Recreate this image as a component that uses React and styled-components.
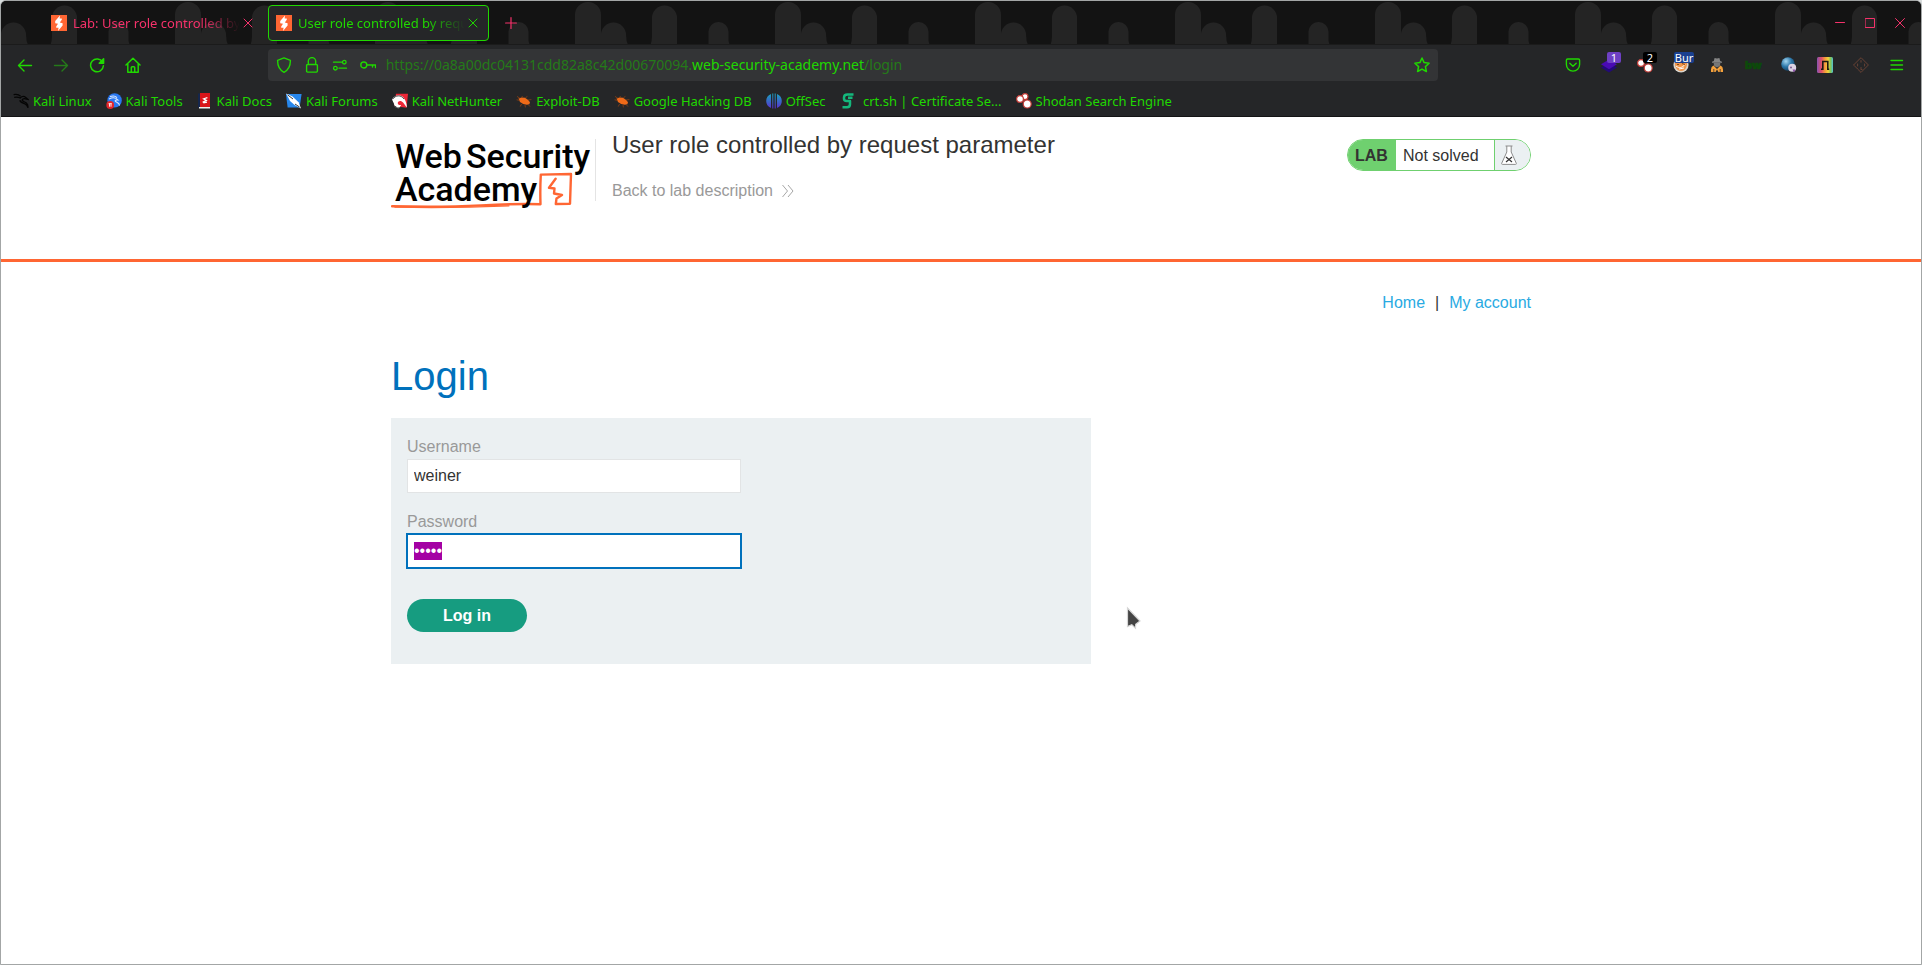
import React, { useEffect, useRef } from "react";
import styled, { createGlobalStyle } from "styled-components";

const c = {
  green: "#20d800",
  greenDim: "#257a19",
  pink: "#f5326b",
  strip: "#131313",
  lump: "#242424",
  bar: "#252628",
  field: "#333436",
  orange: "#ff6633",
};
const uiFont = '"Noto Sans", "Open Sans", sans-serif';

const GlobalStyle = createGlobalStyle`
  *, *::before, *::after { box-sizing: border-box; }
  body { margin: 0; background: #d8dcdc; font-family: "Liberation Sans", Arial, sans-serif; font-size: 16px; color: #333332; }
  button, input { font: inherit; color: inherit; }
  button { border: 0; background: none; padding: 0; cursor: pointer; }
  svg { display: block; flex: none; }
`;

const Window = styled.div`
  display: flex;
  flex-direction: column;
  min-height: 100vh;
  border: 1px solid #a3a6a6;
  border-radius: 6px 6px 0 0;
  overflow: hidden;
  background: #fff;
`;
const Chrome = styled.header`
  background: ${c.bar};
  color: ${c.green};
  font-family: ${uiFont};
  border-bottom: 1px solid #141415;
`;
const TabStrip = styled.div`
  position: relative;
  display: flex;
  align-items: center;
  gap: 4px;
  height: 44px;
  padding: 0 6px 0 42px;
  background: ${c.strip};
`;
const StripArt = styled.svg`
  position: absolute;
  inset: 0;
  width: 100%;
  height: 100%;
`;
const Tab = styled.div`
  position: relative;
  display: flex;
  align-items: center;
  width: 221px;
  height: 36px;
  padding: 0 8px 0 7px;
  border: 1px solid ${(p) => (p.$active ? c.green : "transparent")};
  border-radius: 4px;
  background: ${(p) => (p.$active ? c.bar : "transparent")};
  color: ${(p) => (p.$active ? c.green : c.pink)};
`;
const TabTitle = styled.button`
  display: flex;
  align-items: center;
  gap: 6px;
  flex: 1;
  min-width: 0;
  font-size: 13px;
  line-height: 20px;
  text-align: left;
`;
const TabText = styled.span`
  flex: 1;
  overflow: hidden;
  white-space: nowrap;
  mask-image: linear-gradient(to right, #000 calc(100% - 40px), transparent);
`;
const IconButton = styled.button`
  position: relative;
  display: flex;
  align-items: center;
  justify-content: center;
  flex: none;
  width: ${(p) => p.$w || 36}px;
  height: 32px;
  color: ${(p) => p.$color || "inherit"};
`;
const WindowControls = styled.div`
  display: flex;
  margin-left: auto;
`;
const Toolbar = styled.nav`
  display: flex;
  align-items: center;
  height: 40px;
  padding: 0 6px;
`;
const Spacer = styled.div`
  flex: 1;
`;
const UrlBar = styled.div`
  display: flex;
  align-items: center;
  flex: 10;
  min-width: 0;
  height: 32px;
  padding: 0 2px;
  border-radius: 4px;
  background: ${c.field};
`;
const Address = styled.div`
  flex: 1;
  min-width: 0;
  padding-left: 4px;
  overflow: hidden;
  white-space: nowrap;
  font-size: 14px;
  line-height: 24px;
  color: ${c.greenDim};
`;
const Domain = styled.span`
  color: ${c.green};
`;
const Badge = styled.span`
  position: absolute;
  top: 3px;
  right: ${(p) => (p.$wide ? 5 : 6)}px;
  min-width: ${(p) => (p.$wide ? 20 : 14)}px;
  border-radius: 2px;
  background: ${(p) => p.$bg};
  color: #fff;
  font-size: 11px;
  line-height: 11px;
  text-align: center;
`;
const Bookmarks = styled.ul`
  display: flex;
  align-items: center;
  gap: 14px;
  height: 31px;
  margin: 0;
  padding: 1px 12px 0;
  list-style: none;
`;
const Bookmark = styled.a`
  display: flex;
  align-items: center;
  gap: 4px;
  color: inherit;
  font-size: 13px;
  line-height: 20px;
  text-decoration: none;
  white-space: pre;
`;

const Container = styled.div`
  width: 100%;
  max-width: 1140px;
  margin: 0 auto;
`;
const LabHeader = styled.section`
  height: 145px;
  border-bottom: 3px solid ${c.orange};
`;
const LabRow = styled(Container)`
  display: flex;
  align-items: flex-start;
`;
const LogoLink = styled.a`
  margin-top: 22px;
  padding-right: 4px;
  border-right: 1px solid #e4e4e4;
  height: 62px;
`;
const TitleBlock = styled.div`
  margin-left: 16px;
  padding-top: 14px;
`;
const LabTitle = styled.h2`
  margin: 0 0 17px;
  font-size: 24px;
  line-height: 28px;
  font-weight: 400;
`;
const BackLink = styled.a`
  display: flex;
  align-items: center;
  gap: 8px;
  color: #999;
  line-height: 30px;
  text-decoration: none;
`;
const Status = styled.div`
  display: flex;
  width: 184px;
  height: 32px;
  margin: 22px 0 0 auto;
  border: 1px solid #6fd06f;
  border-radius: 16px;
  overflow: hidden;
  line-height: 32px;
`;
const StatusTag = styled.strong`
  width: 48px;
  padding-left: 7px;
  background: #6fd06f;
`;
const StatusText = styled.span`
  flex: 1;
  padding-left: 7px;
`;
const StatusIcon = styled.span`
  display: flex;
  align-items: center;
  width: 36px;
  padding-left: 6px;
  border-left: 1px solid #6fd06f;
  background: #ebf0f2;
`;
const Main = styled(Container).attrs({ as: "main" })`
  padding-top: 29px;
`;
const PageNav = styled.nav`
  display: flex;
  justify-content: flex-end;
  gap: 10px;
  line-height: 24px;
`;
const NavLink = styled.a`
  color: #29aae2;
  text-decoration: none;
`;
const Heading = styled.h1`
  margin: 38px 0 19px;
  color: #0071bc;
  font-size: 40px;
  line-height: 46px;
  font-weight: 400;
`;
const LoginForm = styled.form`
  max-width: 700px;
  padding: 16px 16px 32px;
  background: #ebf0f2;
`;
const Field = styled.div`
  margin-bottom: 16px;
`;
const Label = styled.label`
  display: block;
  color: #999;
  line-height: 25px;
`;
const Input = styled.input`
  display: block;
  width: 334px;
  max-width: 100%;
  height: 34px;
  padding: 0 6px;
  border: 1px solid #e2e4e5;
  border-radius: 0;
  background: #fff;
  outline: 0;
  &:focus {
    border-color: #0071bc;
    box-shadow: 0 0 0 1px #0071bc;
  }
  &::selection {
    background: rgba(164, 0, 164, 0.996);
    color: #fff;
  }
`;
const Submit = styled.button`
  display: block;
  width: 120px;
  height: 33px;
  margin-top: 31px;
  border-radius: 17px;
  background: #169c80;
  color: #fff;
  font-weight: 700;
`;
const Pointer = styled.svg`
  position: absolute;
  left: 1125px;
  top: 605px;
`;

const Line = ({ size = 16, w = 1.3, children, ...rest }) => (
  <svg width={size} height={size} viewBox={`0 0 ${size} ${size}`} fill="none" stroke="currentColor" strokeWidth={w} strokeLinecap="round" strokeLinejoin="round" aria-hidden="true" {...rest}>
    {children}
  </svg>
);
const Pic = ({ children }) => (
  <svg width="16" height="16" viewBox="0 0 16 16" aria-hidden="true">{children}</svg>
);

const Favicon = () => (
  <Pic>
    <path fill="#ff6633" d="M0 0h16v16H0z" />
    <path fill="#fff" d="M9 .4 4.200 6v2.200l2.800.6-1.800 2.600v1.400h2.400L7 16l4.600-5.600V8.200l-2.800-.6L10.800 4.800V3.400H8.600z" />
  </Pic>
);
const CloseIcon = () => (
  <Line size={10} w={1}><path d="M1 1l8 8M9 1L1 9" /></Line>
);
const Shodan = ({ three }) => (
  <Pic>
    <g stroke="#c23a35" strokeWidth="1.2" fill="#fff">
      {three && <circle cx="9" cy="3.6" r="3" />}
      <circle cx="4" cy="6" r="3.400" />
      <circle cx="11.2" cy="11" r="4" />
    </g>
  </Pic>
);
const Bug = () => (
  <Pic>
    <path fill="#ee6a18" d="M2.500 5.600 5.500 4.400l3.500.4 3.200 2.200 1.800 2.200-.6 2-2.600.6-3.600-.8L4 9z" />
    <path stroke="#9a4512" strokeWidth=".7" fill="none" d="M1 3.400l3 2M.6 6.800l3 .6M5.400 4.600 6.600 3M9.400 4.800l2-1.400M12 7l3.400-.4M5.600 11l-1.400 2.600M9 12l.4 2.400M12.600 12l1.400 1.600" />
  </Pic>
);

const bookmarks = [
  ["Kali Linux", <Pic><path d="M.6 1.6c3-.6 5.400 0 7 1.600M1.200 4.300c2.400-.4 4.500-.2 6 .7 1.500-1.600 4-1.800 5.600-.6l2 1.900-2.300-.5c-1.500-.3-2.900.1-3.400 1.200.5 1.700 2.700 1.800 4.300 3 1.300 1.100 1.700 2.800 1.600 4.800-.6-2-1.300-3.300-3-4-2-.7-4.500-1.300-5.200-3.600" fill="none" stroke="#050505" strokeWidth="1.300" /></Pic>],
  ["Kali Tools", <Pic><circle cx="8.600" cy="7.400" r="7.200" fill="#2a78f0" /><path d="M3 6c3.500-1.800 7-1.500 9 1-2-.3-3.500.4-2.500 1.500 1.500 1 4 1 4 4M4 3.600c3-1 5.500-.6 7 1" fill="none" stroke="#dbe9ff" strokeWidth="1.100" /><circle cx="4.200" cy="12" r="3.900" fill="#e3262b" /><path d="M2.600 10.700h3.200M3.500 10.700v3M5 10.700v3" stroke="#fff" strokeWidth=".9" /></Pic>],
  ["Kali Docs", <Pic><path fill="#15264c" d="M1 .4h3v14.400H1z" /><path fill="#d91419" d="M3 0h10v14H3z" /><path fill="#eee" d="M2 14h11v1.600H2z" /><path d="M10.400 4.600 6.600 5.800l2.800 1.600-3.800 1.800M6.400 9.800l3.600-.6" fill="none" stroke="#fff" strokeWidth="1.200" /></Pic>],
  ["Kali Forums", <Pic><path fill="#2787ec" d="M0 1h15.600l-2 13.600H1.600z" /><path fill="#fff" d="M.2.4 6.500 3.400l6.100 5.800L15 15.600 8.600 12 4 8z" /><path d="M1.500 1.800 7 6M9 11l4.500 3" fill="none" stroke="#222" strokeWidth=".9" /></Pic>],
  ["Kali NetHunter", <Pic><path fill="#ee2737" d="M4 .8h12l-1.400 14L2 13z" /><path fill="#fff" d="M0 6.600C2 2.600 6.600 1 10 3.200c3 2 4.600 6.600 5 11.200-2-1.600-3-5-5.600-6.200-2-.8-4 .4-3.600 2.400.3 1.300 2 1.700 3.400 1.400L7 15.200c-3 0-5-1.400-5-4.400z" /><path d="M.6 6.200C3.600 2 9 1.600 12 6M2.500 12.500C4 15 7 15.500 9.500 14.500" fill="none" stroke="#333" strokeWidth=".9" /></Pic>],
  ["Exploit-DB", <Bug />],
  ["Google Hacking DB", <Bug />],
  ["OffSec", <Pic><defs><linearGradient id="off" x1="0" y1="0" x2="0" y2="16" gradientUnits="userSpaceOnUse"><stop offset="0" stopColor="#16a8bd" /><stop offset="1" stopColor="#5b2ad0" /></linearGradient></defs><path fill="url(#off)" d="M5 1v14A7.500 7.500 0 0 1 5 1zM6.300.6l1-.2v15.200l-1-.2zM8.700.4l1 .2v14.800l-1 .2zM11 1a7.500 7.500 0 0 1 0 14z" /></Pic>],
  [" crt.sh | Certificate Se...", <Pic><path fill="none" stroke="#14b87c" strokeWidth="2.500" strokeLinejoin="round" d="M13.500 1.600H7.400Q4 1.600 4 4.600v1.200q0 2.200 2.600 2.200H10v3.200q0 3-3 3H2.500M8 4.800h4.500" /></Pic>],
  ["Shodan Search Engine", <Shodan three />],
];

function StripPattern() {
  return (
    <StripArt aria-hidden="true">
      <defs>
        <pattern id="lumps" x="-26" y="0" width="200" height="44" patternUnits="userSpaceOnUse">
          <g fill={c.lump}>
            <path d="M0 44V14a13 13 0 0 1 26 0v20a12.500 12.500 0 0 1 25 0q0 6 2 10z" />
            <path d="M75.500 44q1.500-4 1.500-8V17a12.500 12.500 0 0 1 25 0v27z" />
            <path d="M133.500 44V31a10 10 0 0 1 20 0v9l1 4z" />
          </g>
        </pattern>
      </defs>
      <rect width="100%" height="44" fill="url(#lumps)" />
      <path d="M0 43.500h4000" stroke="#1b1b1b" />
    </StripArt>
  );
}

function BrowserTab({ title, active }) {
  return (
    <Tab $active={active}>
      <TabTitle type="button" role="tab" aria-selected={!!active}>
        <Favicon />
        <TabText>{title}</TabText>
      </TabTitle>
      <IconButton $w={15} type="button" aria-label="Close tab"><CloseIcon /></IconButton>
    </Tab>
  );
}

function Extensions() {
  return (
    <>
      <IconButton aria-label="Save to Pocket"><Line w={1.4}><path d="M2.600 2h10.800q1.200 0 1.200 1.200V7.500a6.600 6.600 0 0 1-13.200 0V3.200Q1.400 2 2.600 2zM4.800 6.200 8 9.300l3.200-3.100" /></Line></IconButton>
      <IconButton aria-label="Layers">
        <Pic><path fill="#230a78" d="M0 10.500 8 6l8 4.500-8 5z" /><path fill="#4a0ab4" d="M0 7.300 8 2.500l8 4.800-8 4.900z" /></Pic>
        <Badge $bg="#6e40c4">1</Badge>
      </IconButton>
      <IconButton aria-label="Shodan"><Shodan /><Badge $bg="#000">2</Badge></IconButton>
      <IconButton aria-label="Burp proxy">
        <Pic><circle cx="8" cy="7.800" r="7.600" fill="#d9d4cc" /><path fill="#f0964a" d="M2 5h12c.6 4-1.500 9-6 9S1.400 9 2 5z" /><path d="M3 9c3 2.500 6 2 9-1.500M6 12l5-1" stroke="#fff" strokeWidth="1" fill="none" /><path d="M9 6.500l3 1M4 7.500h2" stroke="#8b4c14" /></Pic>
        <Badge $wide $bg="#1a4090">Bur</Badge>
      </IconButton>
      <IconButton aria-label="User agent">
        <Pic><path fill="#858585" d="M5.600 1l2.400.6L10.400 1l.8 3 1.800.8v1H3v-1L4.800 4z" /><path fill="#777" d="M4.600 6h6.800L10.800 9 8 10.600 5.200 9z" /><path fill="#f5a13b" d="M4.500 8.600 8 12l3.500-3.400q2.500 1 2.500 4V15H9.500L8 12.500 6.500 15H2v-2.400q0-3 2.500-4z" /><path d="M4.800 12v3M11.200 12v3" stroke="#333" strokeWidth=".8" /></Pic>
      </IconButton>
      <IconButton aria-label="BuiltWith">
        <svg width="18" height="16" viewBox="0 0 18 16"><text x="1" y="12" fontFamily="Inter, sans-serif" fontWeight="900" fontSize="11" fill="#0c4a0a" stroke="#0c4a0a" strokeWidth=".6">bw</text></svg>
      </IconButton>
      <IconButton aria-label="Web lookup">
        <Pic><defs><radialGradient id="globe" cx=".35" cy=".3" r=".8"><stop offset="0" stopColor="#a6d8f2" /><stop offset=".5" stopColor="#2d78aa" /><stop offset="1" stopColor="#0d3556" /></radialGradient></defs><circle cx="7" cy="7" r="6.800" fill="url(#globe)" /><circle cx="11.200" cy="10.800" r="4" fill="#dcd3e4" /><circle cx="10" cy="10.600" r="1" fill="#7a5a92" /><path fill="#8d4fa8" d="M11.500 12.500h3L13 15.500z" /></Pic>
      </IconButton>
      <IconButton aria-label="Rainbow">
        <Pic><defs><linearGradient id="rain"><stop offset="0" stopColor="#8a52b0" /><stop offset=".28" stopColor="#e0506a" /><stop offset=".5" stopColor="#f49a3a" /><stop offset=".7" stopColor="#f0d23c" /><stop offset=".86" stopColor="#7cc65a" /><stop offset="1" stopColor="#55bfd8" /></linearGradient></defs><rect width="16" height="16" rx="1.500" fill="url(#rain)" /><path d="M4 12.200h1.800V4.500h5v7.700h1.400" fill="none" stroke="#1b1a14" strokeWidth="1.600" /></Pic>
      </IconButton>
      <IconButton aria-label="Diamond" $color="#7a4a38">
        <Line w={0.8} strokeDasharray="2 .6"><path d="M8 .6 15.400 8 8 15.400.6 8zM8 3.600v1.600M8 10.500v2h1M4.600 7v2M11.600 7v2" /></Line>
      </IconButton>
      <IconButton aria-label="Menu"><Line w={1.4}><path d="M2 3.500h11.500M2 8h11.500M2 12.500h11.500" /></Line></IconButton>
    </>
  );
}

function BrowserChrome() {
  return (
    <Chrome>
      <TabStrip role="tablist">
        <StripPattern />
        <BrowserTab title="Lab: User role controlled by" />
        <BrowserTab title="User role controlled by requ" active />
        <IconButton $color={c.pink} aria-label="New tab"><Line size={12} w={1.2}><path d="M6 .6v10.800M.6 6h10.800" /></Line></IconButton>
        <WindowControls>
          <IconButton $w={30} $color={c.pink} aria-label="Minimize"><Line size={10} w={1}><path d="M.5 4.500h9" /></Line></IconButton>
          <IconButton $w={30} $color={c.pink} aria-label="Maximize"><Line size={10} w={1}><path d="M.5.5h9v9h-9z" /></Line></IconButton>
          <IconButton $w={30} $color={c.pink} aria-label="Close window"><Line size={10} w={1}><path d="M.5.5l9 9M9.500.5l-9 9" /></Line></IconButton>
        </WindowControls>
      </TabStrip>
      <Toolbar aria-label="Browser toolbar">
        <IconButton aria-label="Back"><Line w={1.400}><path d="M14.500 8.500H1.500M7 3 1.500 8.500 7 14" /></Line></IconButton>
        <IconButton $color={c.greenDim} aria-label="Forward"><Line w={1.400}><path d="M1.500 8.500h13M9 3l5.500 5.500L9 14" /></Line></IconButton>
        <IconButton aria-label="Reload"><Line w={1.500}><path d="M13.600 5.200A6.400 6.400 0 1 0 14.400 8.800" /><path d="M14.600 1.800v4.400h-4.400z" fill="currentColor" /></Line></IconButton>
        <IconButton aria-label="Home"><Line w={1.500}><path d="M1 8 8 1.200 15 8M2.800 6.800v8.400h10.400V6.800M6.300 15v-4.400q0-.9.9-.9h1.600q.9 0 .9.9V15" /></Line></IconButton>
        <Spacer />
        <UrlBar>
          <IconButton $w={28} aria-label="Tracking protection"><Line w={1.400}><path d="M8 .9 14.400 3.300q.2 8.600-6.400 12Q1.400 11.900 1.600 3.300z" /></Line></IconButton>
          <IconButton $w={28} aria-label="Connection security"><Line w={1.400}><path d="M4.300 7.500V4.300a3.700 3.700 0 0 1 7.400 0V7.500M3.600 7.500h8.800q1 0 1 1v5.600q0 1-1 1H3.600q-1 0-1-1V8.500q0-1 1-1z" /></Line></IconButton>
          <IconButton $w={28} aria-label="Permissions"><Line w={1.300}><path d="M1.500 5.200h8M7 11.200h7.500" /><circle cx="12.300" cy="5.200" r="1.800" /><circle cx="3.400" cy="11.200" r="1.800" /></Line></IconButton>
          <IconButton $w={28} aria-label="Saved login"><Line w={1.400}><circle cx="3.800" cy="8" r="3" /><path d="M6.800 8h8.700v2.600M12.500 8v2" /></Line></IconButton>
          <Address role="textbox" aria-label="Address" tabIndex={0}>
            https://0a8a00dc04131cdd82a8c42d00670094.<Domain>web-security-academy.net</Domain>/login
          </Address>
          <IconButton $w={28} aria-label="Bookmark this page"><Line w={1.500}><path d="M8 1l2.100 4.600 5 .6-3.700 3.400 1 4.900L8 12.100l-4.400 2.400 1-4.900L.9 6.200l5-.6z" /></Line></IconButton>
        </UrlBar>
        <Spacer />
        <Extensions />
      </Toolbar>
      <Bookmarks>
        {bookmarks.map(([label, icon]) => (
          <li key={label}><Bookmark href="#">{icon}<span>{label}</span></Bookmark></li>
        ))}
      </Bookmarks>
    </Chrome>
  );
}

const Logo = () => (
  <svg width="200" height="72" viewBox="0 0 200 72" role="img" aria-label="Web Security Academy">
    <g fill="none" stroke={c.orange} strokeLinejoin="round" strokeLinecap="round">
      <path strokeWidth="2.400" d="M1 67.200Q50 68.500 90 66.400T149.500 65.200Q149 50 149.800 35.600L180 35 179 64.800 164.800 65 165.500 59.500 171 56 163 54.500 163.500 49.500 158 48.800 164.600 39.800" />
      <path strokeWidth="1.200" d="M4 68.200Q60 69.500 118 66.800" />
    </g>
    <g fill="#000" fontFamily="Roboto, sans-serif" fontWeight="500" fontSize="34">
      <text x="4" y="29">Web</text>
      <text x="75" y="29">Security</text>
      <text x="4" y="62">Academy</text>
    </g>
  </svg>
);

function LabBanner() {
  return (
    <LabHeader>
      <LabRow>
        <LogoLink href="#"><Logo /></LogoLink>
        <TitleBlock>
          <LabTitle>User role controlled by request parameter</LabTitle>
          <BackLink href="#">
            Back to lab description
            <svg width="14" height="14" viewBox="0 0 14 14" fill="none" stroke="#a6a6a6" aria-hidden="true"><path d="M1.500 1l5 6-5 6M7 1l5 6-5 6" /></svg>
          </BackLink>
        </TitleBlock>
        <Status>
          <StatusTag>LAB</StatusTag>
          <StatusText>Not solved</StatusText>
          <StatusIcon>
            <svg width="16" height="20" viewBox="0 0 16 20" fill="none" aria-hidden="true">
              <path fill="#fff" stroke="#8c8c8c" d="M4.500 1h7M5.800 1v6L.6 18.500q0 .9.900.9h13q.9 0 .9-.9L10.200 7V1" />
              <path stroke="#333" strokeWidth="1.200" d="M5 12l6 5M11 12l-6 5" />
            </svg>
          </StatusIcon>
        </Status>
      </LabRow>
    </LabHeader>
  );
}

function Login() {
  const password = useRef(null);
  useEffect(() => {
    password.current.focus();
    password.current.select();
  }, []);
  return (
    <Main>
      <PageNav aria-label="Site">
        <NavLink href="#">Home</NavLink>
        <span>|</span>
        <NavLink href="#">My account</NavLink>
      </PageNav>
      <Heading>Login</Heading>
      <LoginForm onSubmit={(e) => e.preventDefault()}>
        <Field>
          <Label htmlFor="username">Username</Label>
          <Input id="username" type="text" defaultValue="weiner" />
        </Field>
        <Field>
          <Label htmlFor="password">Password</Label>
          <Input id="password" type="password" defaultValue="peter" ref={password} />
        </Field>
        <Submit type="submit">Log in</Submit>
      </LoginForm>
    </Main>
  );
}

export default function App() {
  return (
    <>
      <GlobalStyle />
      <Window>
        <BrowserChrome />
        <LabBanner />
        <Login />
      </Window>
      <Pointer width="18" height="28" viewBox="0 0 18 28" aria-hidden="true">
        <path d="M2.500 3v18.500l4.300-1.700 3.700 3.400.2-4 4.300-3.200z" fill="#444" stroke="#d6d6d6" strokeWidth="1.200" />
      </Pointer>
    </>
  );
}
